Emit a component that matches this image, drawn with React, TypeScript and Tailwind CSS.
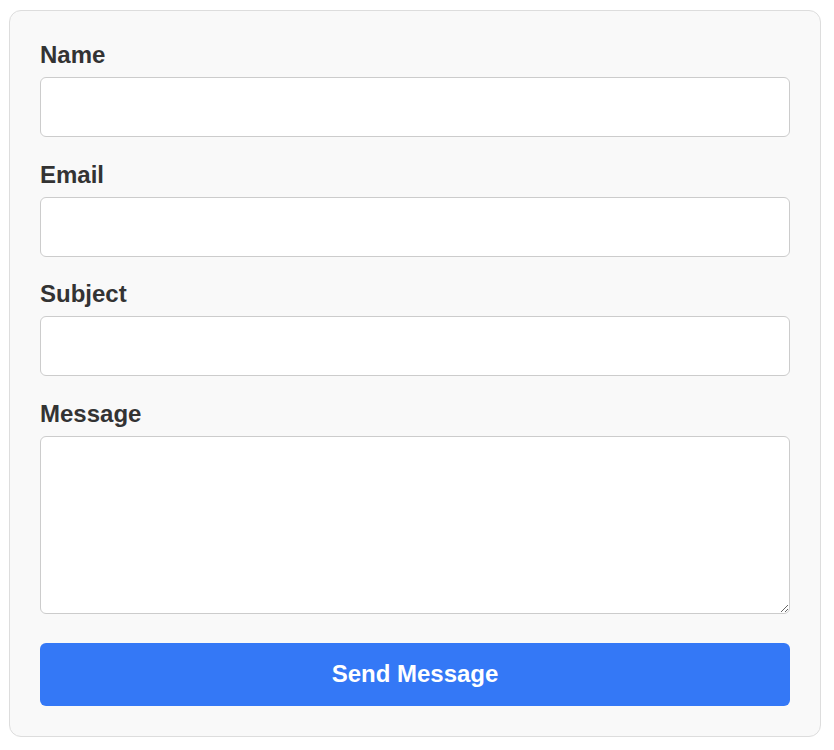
import { useState } from 'react';

const FIELDS = [
  { key: 'name', label: 'Name', type: 'text' },
  { key: 'email', label: 'Email', type: 'email' },
  { key: 'subject', label: 'Subject', type: 'text' },
];

export default function App() {
  const [values, setValues] = useState<Record<string, string>>({});

  const update = (key: string, v: string) => setValues((prev) => ({ ...prev, [key]: v }));

  return (
    <div className="min-h-screen bg-white pt-[10px] pl-[9px]" style={{ fontFamily: '"Liberation Sans", Arial, sans-serif' }}>
      <form
        className="w-[812px] rounded-[12px] border border-[#dddddd] bg-[#f9f9f9] p-[30px]"
        onSubmit={(e) => e.preventDefault()}
      >
        {FIELDS.map((f) => (
          <div key={f.key} className="mb-[23.5px]">
            <label htmlFor={f.key} className="mb-2 block text-[24px] font-bold leading-[28px] text-[#333333]">
              {f.label}
            </label>
            <input
              id={f.key}
              type={f.type}
              value={values[f.key] ?? ''}
              onChange={(e) => update(f.key, e.target.value)}
              className="block h-[60px] w-full rounded-[6px] border border-[#cccccc] bg-white px-3 text-[20px] outline-none"
            />
          </div>
        ))}

        <div className="mb-[29px]">
          <label htmlFor="message" className="mb-2 block text-[24px] font-bold leading-[28px] text-[#333333]">
            Message
          </label>
          <textarea
            id="message"
            value={values.message ?? ''}
            onChange={(e) => update('message', e.target.value)}
            className="block h-[178px] w-full rounded-[6px] border border-[#cccccc] bg-white p-3 text-[20px] outline-none"
          />
        </div>

        <button
          type="submit"
          className="block h-[63px] w-full rounded-[6px] bg-[#3478f6] text-[24px] font-bold text-white"
        >
          Send Message
        </button>
      </form>
    </div>
  );
}
